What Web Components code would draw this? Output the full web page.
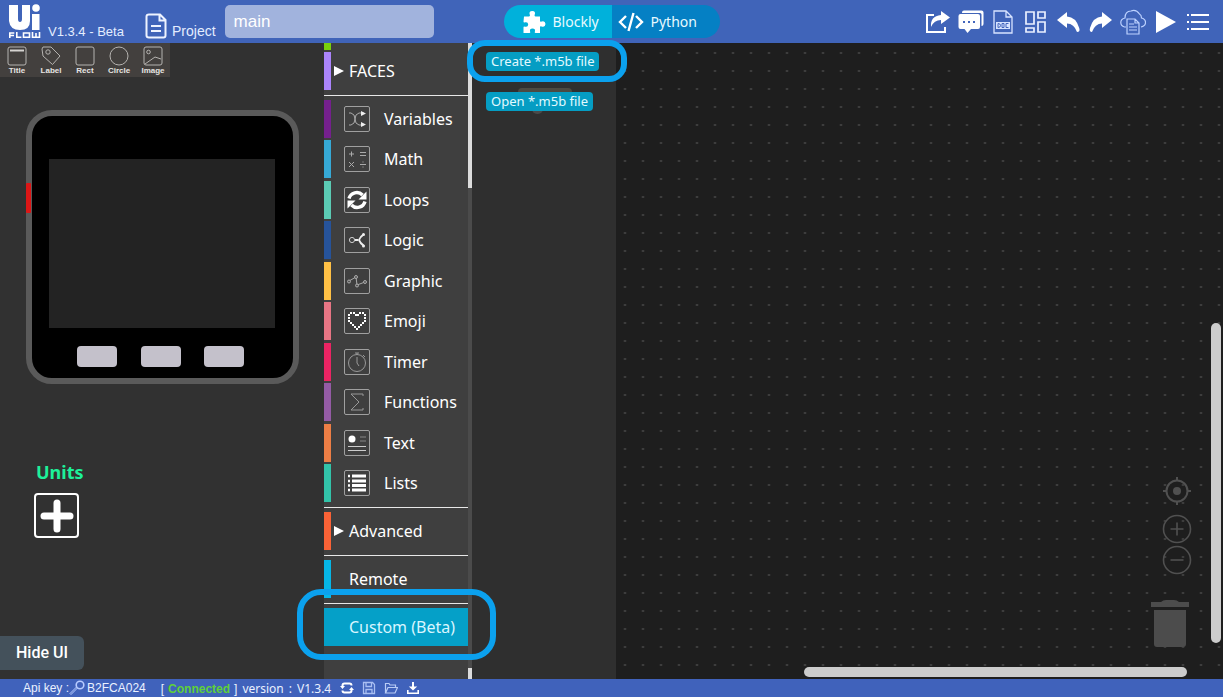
<!DOCTYPE html>
<html lang="en">
<head>
<meta charset="utf-8">
<title>UiFlow</title>
<style>
  html, body { margin: 0; height: 100%; }
  body { background: #1e1e1e; color: #fff; font-family: "Liberation Sans", Arial, sans-serif; overflow: hidden; }
</style>
</head>
<body>
<flow-app></flow-app>

<script>
/* name: [width, height, markup] */
const ICONS = {
  logo: [33, 35, '<g fill="#fff"><path d="M1 1h9v14q0 3 2 3t2-3V1h8v16q0 9-10 9T1 17z"/><circle cx="28" cy="4" r="3.8"/><path d="M24 10h7.500v16H24z"/></g><g fill="none" stroke="#fff" stroke-width="1.600"><path d="M1.800 34v-5h4.500M2 31.500h4M8.800 28v5.200h4.600M15.500 29h6v4.200h-6zM24.500 28v5.200h7V28M28 29v4"/></g>'],
  file: [22, 26, '<path d="M4 1.500h11L20.500 7v15.500q0 2-2 2H4q-2.500 0-2.500-2v-19q0-2 2.500-2zM14.500 2v5.500h6M6 13h10M6 18h10" fill="none" stroke="#eef3ff" stroke-width="2"/>'],
  puzzle: [24, 24, '<path d="M2 6.500h5q1.500 0 .8-1.700Q6.500 1.200 10.300 1q3.700.2 2.400 3.800-.7 1.700.8 1.700H18v4.300q0 1.500 1.600.8 3.600-1 3.900 2.400-.3 3.600-3.900 2.400-1.600-.7-1.600.9V23h-4.300q-1.500 0-.8-1.500.8-2.900-2.400-3-3.200.1-2.400 3 .7 1.500-.8 1.500H1.500v-5.500q0-1.500 1.500-.8 3 .8 3.200-2.200-.2-3-3.200-2.200-1.500.7-1.500-.8z" fill="#fff"/>'],
  code: [26, 22, '<path d="M8 5 2 11l6 6M18 5l6 6-6 6M15.500 2l-5 18" fill="none" stroke="#fff" stroke-width="2.400"/>'],
  share: [26, 24, '<path d="M9 5H2v17h18v-5" fill="none" stroke="#fff" stroke-width="2"/><path d="M16 1l9 6.500-9 6.500v-4Q9 10 6 17 5 6 16 5z" fill="#fff"/>'],
  chat: [26, 24, '<path d="M4 2.500Q4 .500 6 .500h17.500q2 0 2 2V14q0 2-2 2V4.500q0-1.500-1.500-1.500H4z" fill="#fff"/><path d="M2.500 4H20q2 0 2 2v11q0 2-2 2h-7l-3.500 4L6.500 19h-4q-2 0-2-2V6q0-2 2-2z" fill="#fff"/><path d="M5 11h2v2H5zM10 11h2v2h-2zM15 11h2v2h-2z" fill="#4265bd"/>'],
  doc: [26, 24, '<path d="M4 1h12l6 6v16H4zM16 1v6h6" fill="none" stroke="#d7e3ff" stroke-width="1.300"/><path d="M6 12h14v7H6z" fill="#d7e3ff"/><path d="M8 13.500v4q2.500 0 2.500-2t-2.500-2zM12 13.500h2v4h-2zM18.500 13.500H16v4h2.500" fill="none" stroke="#4265bd"/>'],
  grid: [26, 24, '<path d="M3 2h8v12H3zM15 2h7v6h-7zM3 18h8v4H3zM15 12h7v10h-7z" fill="none" stroke="#eaf0ff" stroke-width="1.700"/>'],
  undo: [26, 24, '<path d="M12 2 2 10l10 8v-4.500q7 0 10 8.500 3.500 0 2.200-4Q21 7 12 6.500z" fill="#fff"/>'],
  redo: [26, 24, '<path d="M14 2l10 8-10 8v-4.500Q7 13.500 4 22q-3 0-2-4Q5 7 14 6.500z" fill="#fff"/>'],
  cloud: [26, 26, '<path d="M6 18H4.500Q.8 17 .8 13.500T5 9Q5 2 11 2q5-2 8.500 3 2 1 2 4 4 1 4 4.500T21 18" fill="none" stroke="#bdd2ff" stroke-width="1.200"/><path d="M7 10h8l4 4v11H7zM15 10v4h4M9 15h5M9 18h8M9 21h8" fill="none" stroke="#bdd2ff" stroke-width="1.200"/>'],
  play: [26, 24, '<path d="M3 1l20 11L3 23z" fill="#fff"/>'],
  menu: [26, 24, '<path d="M6 5h18M6 12h18M6 19h18M2 5h2M2 12h2M2 19h2" stroke="#fff" stroke-width="2"/>'],
  title: [20, 20, '<rect x="1" y="1" width="18" height="18" rx="2" fill="none" stroke="#b5b3b0"/><path d="M3 4.500h14" stroke="#d5d3d0" stroke-width="2"/>'],
  label: [20, 20, '<path d="M1 3l1-2h8l9 9-7.500 8.500L2 10zM10 1" fill="none" stroke="#b5b3b0" stroke-linejoin="round"/><circle cx="7" cy="6" r="2.200" fill="none" stroke="#b5b3b0"/>'],
  rect: [20, 20, '<rect x="1" y="1" width="18" height="18" rx="2" fill="none" stroke="#b5b3b0"/>'],
  circle: [20, 20, '<circle cx="10" cy="10" r="9" fill="none" stroke="#b5b3b0"/>'],
  image: [20, 20, '<rect x="1" y="1" width="18" height="18" rx="2" fill="none" stroke="#b5b3b0"/><circle cx="5.500" cy="6" r="1.800" fill="none" stroke="#b5b3b0"/><path d="M2 18l10-7 6 2" fill="none" stroke="#b5b3b0"/>'],
  variables: [24, 24, '<path d="M4 6h2q4 1 4 6t-4 6H4M19 6h-5q-4 1-4 6t4 6h5" fill="none" stroke="#aaa"/><path d="M16 4l5 2.500-5 2.500zM16 15l5 2.500-5 2.500z" fill="#eee"/>'],
  math: [24, 24, '<path d="M4 7h5M6.500 4.500v5M15 5.500h6M15 8.500h6M4 15l5 5M9 15l-5 5M15 17.500h6M17.500 15h1M17.500 20h1" stroke="#aaa" fill="none"/>'],
  loops: [24, 24, '<path d="M4 10.500A8 8 0 0 1 17.500 7M20 13.500A8 8 0 0 1 6.500 17" fill="none" stroke="#fff" stroke-width="3.400"/><path d="M21.500 3.500v8h-8zM2.500 20.500v-8h8z" fill="#fff"/>'],
  logic: [24, 24, '<circle cx="7" cy="12" r="2.600" fill="none" stroke="#ccc"/><path d="M10 12h3M19 6q-4 3-5 6 1 3 5 6" stroke="#eee" stroke-width="2" fill="none"/><circle cx="18.500" cy="6.500" r="1.500" fill="#eee"/><circle cx="18.500" cy="18" r="1.500" fill="#eee"/>'],
  graphic: [24, 24, '<path d="M4 12l7-4 1 8 8-3" fill="none" stroke="#aaa"/><g fill="#555" stroke="#aaa"><circle cx="4" cy="12.500" r="1.500"/><circle cx="11" cy="8" r="1.500"/><circle cx="12" cy="16.500" r="1.500"/><circle cx="20" cy="13" r="1.500"/></g>'],
  emoji: [24, 24, '<path d="M5 3h2v2H5zM8 3h2v2H8zM14 3h2v2h-2zM17 3h2v2h-2zM3 5h2v2H3zM10 5h2v2h-2zM12 5h2v2h-2zM19 5h2v2h-2zM3 8h2v2H3zM19 8h2v2h-2zM3 11h2v2H3zM19 11h2v2h-2zM5 13h2v2H5zM17 13h2v2h-2zM7 15h2v2H7zM15 15h2v2h-2zM9 17h2v2H9zM13 17h2v2h-2zM11 19h2v2h-2z" fill="#fff"/>'],
  timer: [24, 24, '<circle cx="12" cy="13" r="8.500" fill="none" stroke="#999"/><path d="M12 7v6l2 3M10 3h4M12 3v2M18 5l2 2" fill="none" stroke="#999"/>'],
  functions: [24, 24, '<path d="M18 6V4H6l8 8-8 8h12v-2" fill="none" stroke="#999"/>'],
  text: [24, 24, '<circle cx="7" cy="8" r="3.500" fill="#fff"/><path d="M15 6h6M15 10h6" stroke="#888"/><path d="M3 15.500h18M3 19.500h18" stroke="#ccc"/>'],
  lists: [24, 24, '<path d="M7 5h14M7 10h14M7 14.500h14M7 19h14" stroke="#fff" stroke-width="3"/><path d="M3 5h2M3 10h2M3 14.500h2M3 19h2" stroke="#fff" stroke-width="2.400"/>'],
  arrow: [10, 12, '<path d="M0 1l10 5-10 5z" fill="#fff"/>'],
  plus: [34, 34, '<path d="M17 4v26M4 17h26" stroke="#fff" stroke-width="7" stroke-linecap="round"/>'],
  key: [16, 16, '<circle cx="11" cy="5" r="3.800" fill="none" stroke="#b8ccff" stroke-width="1.600"/><path d="M8.500 8 2 14.500l-1-1L7.500 7" fill="none" stroke="#b8ccff"/>'],
  sync: [14, 14, '<path d="M2.500 5.500v-1q0-2 2-2h5q2 0 2 2M11.500 8.500v1q0 2-2 2h-5q-2 0-2-2" fill="none" stroke="#fff" stroke-width="2"/><path d="M0 5h5L2.500 8zM9 9h5l-2.500-3z" fill="#fff"/>'],
  save: [14, 14, '<path d="M1.500 1.500h9l2 2v9h-11zM4 1.500v4h5.500v-4M4 12.500v-4h6v4" fill="none" stroke="#a9bff2" stroke-width="1.300"/>'],
  folder: [14, 14, '<path d="M1.500 12V2.500H5l1 1.500h5.500v2.500M1.500 12l2.500-5.500h9.500L11 12z" fill="none" stroke="#b9ccf6" stroke-width="1.200"/>'],
  download: [14, 14, '<path d="M6 1h2v4.500h3.200L7 9.500 2.800 5.500H6z" fill="#fff"/><path d="M1.800 9v3.200h10.400V9" fill="none" stroke="#fff" stroke-width="1.600"/>'],
  target: [28, 28, '<g stroke="#505050" fill="none" stroke-width="2"><circle cx="14" cy="14" r="10.500"/><path d="M14 0v4M14 24v4M0 14h4M24 14h4"/></g><circle cx="14" cy="14" r="4" fill="#505050"/>'],
  zoomin: [30, 30, '<circle cx="15" cy="15" r="13.500" fill="none" stroke="#505050" stroke-width="1.600"/><path d="M8.500 15h13M15 8.500v13" stroke="#505050" stroke-width="1.600"/>'],
  zoomout: [30, 30, '<circle cx="15" cy="15" r="13.500" fill="none" stroke="#505050" stroke-width="1.600"/><path d="M8.500 15h13" stroke="#505050" stroke-width="1.600"/>'],
  trash: [40, 49, '<path d="M1 3h10q2-2 5-2h8q3 0 5 2h10v5H1zM4 11h32v34q0 3-3 3H7q-3 0-3-3z" fill="#4c4c4c"/>']
};

const define = (name, html, setup) => {
  const template = document.createElement('template');
  template.innerHTML = html;
  customElements.define(name, class extends HTMLElement {
    constructor() {
      super();
      this.attachShadow({ mode: 'open' }).append(template.content.cloneNode(true));
    }
    connectedCallback() { if (setup) setup(this, this.shadowRoot); }
  });
};

define('ui-icon', '<style>:host{display:block;flex:none}svg{display:block}</style><span></span>', (el, root) => {
  const icon = ICONS[el.getAttribute('name')];
  if (!icon) return;
  const [w, h, body] = icon;
  root.querySelector('span').innerHTML =
    `<svg width="${w}" height="${h}" viewBox="0 0 ${w} ${h}" aria-hidden="true">${body}</svg>`;
});

/* Rounded ring that marks the control it is placed in. */
define('hint-ring', `<style>
  :host{position:absolute;box-sizing:border-box;border:6px solid #0ba1ee;border-radius:24px;pointer-events:none;z-index:5}
</style>`);

define('icon-button', `<style>
  :host{display:block}
  button{all:unset;display:flex;cursor:pointer}
</style><button type="button"></button>`, (el, root) => {
  const button = root.querySelector('button');
  button.innerHTML = `<ui-icon name="${el.getAttribute('icon')}"></ui-icon>`;
  button.setAttribute('aria-label', el.getAttribute('label'));
});

define('mode-switch', `<style>
  :host{display:flex;height:33px;border-radius:17px;overflow:hidden;font-family:"Noto Sans",sans-serif;font-size:14px}
  button{all:unset;box-sizing:border-box;width:108px;display:flex;align-items:center;gap:7px;cursor:pointer;color:#e8faff}
  .on{background:#00b1db;padding-left:18px}
  .off{background:#0580c4;padding-left:6px}
</style>
<button type="button" class="on"><ui-icon name="puzzle"></ui-icon>Blockly</button>
<button type="button" class="off"><ui-icon name="code"></ui-icon>Python</button>`);

define('app-header', `<style>
  :host{display:grid;grid-template-columns:1fr auto 1fr;align-items:center;height:43px;background:#4064b9}
  .left,.right{display:flex;align-items:center}
  .left{padding-left:8px}
  .version{font-size:13px;margin:20px 19px 0 7px;color:#e4edff;white-space:nowrap;width:78px;line-height:16px}
  label{display:flex;align-items:center;font-size:14px;color:#e4edff;gap:5px}
  label span{margin-top:18px;line-height:16px}
  label ui-icon{margin-top:8px}
  input{box-sizing:border-box;width:209px;height:33px;margin-left:9px;padding:0 9px;border:0;border-radius:5px;background:#a1b3dd;color:#fff;font:17px/20px "Liberation Sans",sans-serif}
  .right{justify-self:end;width:286px;justify-content:space-between;margin-right:12px}
</style>
<div class="left">
  <ui-icon name="logo"></ui-icon><span class="version">V1.3.4 - Beta</span>
  <label for="project"><ui-icon name="file"></ui-icon><span>Project</span></label>
  <input id="project" value="main">
</div>
<mode-switch></mode-switch>
<div class="right">
  <icon-button icon="share" label="Share"></icon-button>
  <icon-button icon="chat" label="Forum"></icon-button>
  <icon-button icon="doc" label="Docs"></icon-button>
  <icon-button icon="grid" label="Examples"></icon-button>
  <icon-button icon="undo" label="Undo"></icon-button>
  <icon-button icon="redo" label="Redo"></icon-button>
  <icon-button icon="cloud" label="Manager"></icon-button>
  <icon-button icon="play" label="Run"></icon-button>
  <icon-button icon="menu" label="Menu"></icon-button>
</div>`);

define('tool-button', `<style>
  :host{display:block;width:34px}
  button{all:unset;display:flex;flex-direction:column;align-items:center;width:100%;cursor:pointer;font:bold 8px/10px "Liberation Sans",sans-serif;color:#e6e4e2}
</style><button type="button"><span></span><slot></slot></button>`, (el, root) => {
  root.querySelector('span').innerHTML = `<ui-icon name="${el.getAttribute('icon')}"></ui-icon>`;
});

define('device-preview', `<style>
  :host{display:flex;flex-direction:column;box-sizing:border-box;position:relative;width:273px;height:274px;border:6px solid #5a5a5a;border-radius:26px;background:#000;padding:43px 18px 0 17px}
  .screen{height:169px;background:#232323}
  .keys{display:flex;justify-content:space-between;padding:18px 31px 0 28px}
  .keys button{all:unset;width:40px;height:21px;border-radius:4px;background:#c4c1cb}
  .power{position:absolute;left:-6px;top:67px;width:5px;height:30px;background:#dc1616;border-radius:1px}
</style>
<div class="power"></div><div class="screen"></div>
<div class="keys"><button type="button" aria-label="A"></button><button type="button" aria-label="B"></button><button type="button" aria-label="C"></button></div>`);

define('device-panel', `<style>
  :host{display:flex;flex-direction:column;align-items:flex-start;background:#313131}
  .tools{display:flex;background:#43403e;padding-top:3px;height:31px}
  device-preview{margin:33px 0 0 26px}
  h2{margin:76px 0 0 36px;font:bold 18px/24px "Noto Sans",sans-serif;color:#1df19a}
  .add{all:unset;box-sizing:border-box;width:45px;height:45px;margin:9px 0 0 34px;border:2px solid #fff;border-radius:4px;display:flex;align-items:center;justify-content:center;cursor:pointer}
  .hide{all:unset;box-sizing:border-box;margin:auto 0 9px;height:34px;width:84px;text-align:center;border-radius:0 6px 6px 0;background:#44515b;font:500 16px/34px Roboto,sans-serif;cursor:pointer}
</style>
<div class="tools">
  <tool-button icon="title">Title</tool-button><tool-button icon="label">Label</tool-button><tool-button icon="rect">Rect</tool-button><tool-button icon="circle">Circle</tool-button><tool-button icon="image">Image</tool-button>
</div>
<device-preview></device-preview>
<h2>Units</h2>
<button type="button" class="add" aria-label="Add unit"><ui-icon name="plus"></ui-icon></button>
<button type="button" class="hide">Hide UI</button>`);

define('menu-item', `<style>
  :host{display:block;position:relative;height:38px;flex:none}
  button{all:unset;box-sizing:border-box;display:flex;align-items:center;width:100%;height:100%;border-left:7px solid var(--bar);cursor:pointer;font:16px/24px "Noto Sans",sans-serif;white-space:nowrap}
  .box{box-sizing:border-box;width:26px;height:26px;border:1px solid #a0a0a0;border-radius:2px;margin:0 14px 0 13px}
  .lead{display:flex;width:18px;padding-left:3px;box-sizing:border-box}
  :host([selected]) button{background:#05a0c8;color:#d9f6ff}
</style><button type="button"><span></span><slot></slot></button><slot name="hint"></slot>`, (el, root) => {
  const span = root.querySelector('span');
  const name = el.getAttribute('icon');
  span.className = name && name !== 'arrow' ? 'box' : 'lead';
  if (name) span.innerHTML = `<ui-icon name="${name}"></ui-icon>`;
  el.style.setProperty('--bar', el.getAttribute('bar'));
});

define('block-menu', `<style>
  :host{display:flex;background:#3f3f3f}
  nav{display:flex;flex-direction:column;width:144px}
  .cut{width:7px;height:7px;background:#78d10c;margin-bottom:2px}
  hr{width:100%;height:1px;border:0;margin:5px 0 4px;background:#e8e8e8}
  .group{display:flex;flex-direction:column;justify-content:space-between;height:402px}
  .bar{display:flex;flex-direction:column;justify-content:space-between;width:4px;background:#4b4b4b}
  .thumb{height:145px;background:#dcdcdc}
  .end{height:11px;background:#dcdcdc}
  hint-ring{left:-27px;right:-28px;top:-19px;bottom:-14px}
</style>
<nav aria-label="Blocks">
  <div class="cut"></div>
  <menu-item icon="arrow" bar="#ab84fb">FACES</menu-item>
  <hr>
  <div class="group">
    <menu-item icon="variables" bar="#75208d">Variables</menu-item>
    <menu-item icon="math" bar="#36a9d6">Math</menu-item>
    <menu-item icon="loops" bar="#5bcbb4">Loops</menu-item>
    <menu-item icon="logic" bar="#26539a">Logic</menu-item>
    <menu-item icon="graphic" bar="#ffc045">Graphic</menu-item>
    <menu-item icon="emoji" bar="#e87584">Emoji</menu-item>
    <menu-item icon="timer" bar="#eb2463">Timer</menu-item>
    <menu-item icon="functions" bar="#945ba5">Functions</menu-item>
    <menu-item icon="text" bar="#ed7e45">Text</menu-item>
    <menu-item icon="lists" bar="#32c3a9">Lists</menu-item>
  </div>
  <hr>
  <menu-item icon="arrow" bar="#fa6236">Advanced</menu-item>
  <hr>
  <menu-item bar="#06b6e6">Remote</menu-item>
  <hr>
  <menu-item bar="#05a0c8" selected>Custom (Beta)<hint-ring slot="hint"></hint-ring></menu-item>
</nav>
<div class="bar"><div class="thumb"></div><div class="end"></div></div>`);

define('block-flyout', `<style>
  :host{display:flex;flex-direction:column;align-items:flex-start;gap:21px;box-sizing:border-box;width:144px;padding:9px 0 0 14px;background:#2f2f2f}
  .row{position:relative;display:flex}
  button{all:unset;position:relative;height:19px;padding:0 5px;border-radius:4px;background:#059dc3;color:#e2faff;font:13px/17px "Noto Sans",sans-serif;white-space:nowrap;cursor:pointer}
  hint-ring{left:-19px;right:-28px;top:-12px;bottom:-11px;border-radius:18px}
  .ghost{position:absolute;left:32px;top:-4px;width:54px;height:12px;border-radius:4px 4px 0 0;background:#4c4a42}
  .knob{position:absolute;left:46px;top:12px;width:11px;height:10px;border-radius:6px;background:#4a4a4a}
</style>
<div class="row"><button type="button">Create *.m5b file</button><hint-ring></hint-ring></div>
<div class="row"><div class="ghost"></div><div class="knob"></div><button type="button">Open *.m5b file</button></div>`);

define('block-canvas', `<style>
  :host{display:block;position:relative;background:#1e1e1e radial-gradient(ellipse 2px 1px at 9px 10px,#484848 0,#3c3c3c 60%,transparent 100%) 18px 0/18px 18px}
  .tools{position:absolute;right:19px;bottom:31px;display:flex;flex-direction:column;align-items:center}
  .tools icon-button:nth-child(2){margin-top:9px}
  .tools icon-button:nth-child(3){margin-top:1px}
  .trash{margin:24px 14px 0 0}
  .v{position:absolute;right:2px;top:44%;bottom:36px;width:10px;border-radius:5px;background:#ccc}
  .h{position:absolute;left:31%;right:36px;bottom:2px;height:10px;border-radius:5px;background:#ccc}
</style>
<div class="tools">
  <icon-button icon="target" label="Centre"></icon-button>
  <icon-button icon="zoomin" label="Zoom in"></icon-button>
  <icon-button icon="zoomout" label="Zoom out"></icon-button>
  <ui-icon class="trash" name="trash"></ui-icon>
</div>
<div class="v"></div><div class="h"></div>`);

define('app-footer', `<style>
  :host{display:flex;align-items:center;height:18px;padding-left:23px;background:#4062bb;font-size:12px;line-height:18px;color:#eaf1ff;white-space:nowrap}
  .key{margin-right:2px}
  .state{margin:2px 5px 0 15px}
  .state b{color:#5fd03a;margin:0 4px}
  .ver{display:flex;gap:5px;margin:2px 9px 0 0;font-family:"Noto Sans",sans-serif}
  .icons{display:flex;gap:8px}
</style>
<span>Api key :</span><ui-icon class="key" name="key"></ui-icon><span>B2FCA024</span>
<span class="state">[<b>Connected</b>]</span><span class="ver"><span>version</span><span>:</span><span>V1.3.4</span></span>
<div class="icons">
  <icon-button icon="sync" label="Refresh"></icon-button>
  <icon-button icon="save" label="Save"></icon-button>
  <icon-button icon="folder" label="Open"></icon-button>
  <icon-button icon="download" label="Download"></icon-button>
</div>`);

define('flow-app', `<style>
  :host{display:flex;flex-direction:column;height:100vh}
  main{flex:1;min-height:0;display:grid;grid-template-columns:324px auto auto 1fr;grid-template-rows:minmax(0,1fr)}
</style>
<app-header></app-header>
<main><device-panel></device-panel><block-menu></block-menu><block-flyout></block-flyout><block-canvas></block-canvas></main>
<app-footer></app-footer>`);
</script>
</body>
</html>
